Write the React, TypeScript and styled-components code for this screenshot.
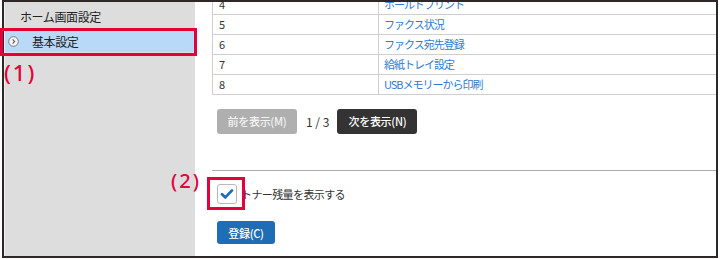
import styled, { createGlobalStyle } from 'styled-components';

const GlobalStyle = createGlobalStyle`
  body {
    margin: 0;
    background: #fff;
    font-family: "Noto Sans CJK JP", "Noto Sans", sans-serif;
  }
`;

const Screen = styled.div`
  position: relative;
  width: 720px;
  height: 260px;
  overflow: hidden;
  background: #fff;
`;

const Frame = styled.div`
  box-sizing: border-box;
  margin-left: 2px;
  width: 716px;
  height: 258px;
  border: 2px solid #2e2727;
  display: flex;
  overflow: hidden;
`;

const Sidebar = styled.div`
  width: 191px;
  flex-shrink: 0;
  background: #dddddd;
  border-left: 1px solid #f0f0f0;
  box-sizing: border-box;
  padding-top: 3px;
  display: flex;
  flex-direction: column;
  gap: 3px;
`;

const NavItem = styled.div<{ $active?: boolean }>`
  height: 22px;
  display: flex;
  align-items: center;
  gap: 13px;
  padding-left: ${(p) => (p.$active ? '3px' : '15px')};
  background: ${(p) => (p.$active ? '#b9d9f8' : 'transparent')};
  font-size: 12px;
  letter-spacing: -0.4px;
  color: #222;
`;

const Main = styled.div`
  flex: 1;
  overflow: hidden;
  padding-left: 17px;
`;

const Table = styled.table`
  margin-top: -8px;
  width: 540px;
  border-collapse: collapse;
  border-left: 1px solid #cfcfcf;
  font-size: 11px;
`;

const Row = styled.tr`
  height: 20px;
  border-bottom: 1px solid #cfcfcf;
`;

const NumCell = styled.td`
  width: 159px;
  padding: 0 0 0 6px;
  border-right: 1px solid #cfcfcf;
  color: #333;
`;

const LinkCell = styled.td`
  padding: 0 0 0 5px;
  color: #2f7ad2;
  letter-spacing: -1px;
`;

const Pager = styled.div`
  margin-top: 14px;
  padding-left: 5px;
  display: flex;
  align-items: center;
`;

const Button = styled.div<{ $tone: 'off' | 'dark' | 'blue' }>`
  width: ${(p) => (p.$tone === 'blue' ? '58px' : '80px')};
  height: ${(p) => (p.$tone === 'blue' ? '23px' : '25px')};
  display: inline-flex;
  align-items: center;
  justify-content: center;
  border-radius: 3px;
  font-size: 11px;
  font-weight: 500;
  letter-spacing: -0.3px;
  color: ${(p) => (p.$tone === 'off' ? '#f2f2f2' : '#fff')};
  background: ${(p) =>
    p.$tone === 'off' ? '#afafaf' : p.$tone === 'dark' ? '#333333' : '#1e6db5'};
`;

const PageCount = styled.span`
  margin: 0 8px 0 9px;
  font-size: 12px;
  color: #333;
`;

const Divider = styled.div`
  margin-top: 36px;
  border-top: 1px solid #ababab;
`;

const CheckRow = styled.div`
  margin-top: 13px;
  padding-left: 5px;
  display: flex;
  align-items: center;
  gap: 4px;
  font-size: 11px;
  letter-spacing: -0.6px;
  color: #333;
`;

const CheckBox = styled.div`
  box-sizing: border-box;
  width: 20px;
  height: 20px;
  border: 1px solid #b8b8b8;
  border-radius: 3px;
  background: #fff;
  display: flex;
  align-items: center;
  justify-content: center;
`;

const Submit = styled.div`
  margin-top: 15px;
  padding-left: 5px;
`;

const Marker = styled.div<{ $x: number; $y: number; $w: number; $h: number }>`
  position: absolute;
  left: ${(p) => p.$x}px;
  top: ${(p) => p.$y}px;
  width: ${(p) => p.$w}px;
  height: ${(p) => p.$h}px;
  box-sizing: border-box;
  border: 3px solid #e4003b;
`;

const Label = styled.div<{ $x: number; $y: number; $size: number }>`
  position: absolute;
  left: ${(p) => p.$x}px;
  top: ${(p) => p.$y}px;
  font-family: "Noto Sans", sans-serif;
  font-size: ${(p) => p.$size}px;
  font-weight: 500;
  line-height: 1;
  letter-spacing: 2px;
  color: #e4003b;
`;

const rows = [
  { n: '4', label: 'ホールドプリント' },
  { n: '5', label: 'ファクス状況' },
  { n: '6', label: 'ファクス宛先登録' },
  { n: '7', label: '給紙トレイ設定' },
  { n: '8', label: 'USBメモリーから印刷' },
];

function ChevronCircle() {
  return (
    <svg width="11" height="11" viewBox="0 0 11 11">
      <circle cx="5.5" cy="5.5" r="4.8" fill="#f5f5f5" stroke="#7a7a7a" strokeWidth="1" />
      <path d="M4.6 3.4 L6.6 5.5 L4.6 7.6" fill="none" stroke="#666" strokeWidth="1.2" />
    </svg>
  );
}

export default function App() {
  return (
    <Screen>
      <GlobalStyle />
      <Frame>
        <Sidebar>
          <NavItem>ホーム画面設定</NavItem>
          <NavItem $active>
            <ChevronCircle />
            基本設定
          </NavItem>
        </Sidebar>
        <Main>
          <Table>
            <tbody>
              {rows.map((r) => (
                <Row key={r.n}>
                  <NumCell>{r.n}</NumCell>
                  <LinkCell>{r.label}</LinkCell>
                </Row>
              ))}
            </tbody>
          </Table>
          <Pager>
            <Button $tone="off">前を表示(M)</Button>
            <PageCount>1 / 3</PageCount>
            <Button $tone="dark">次を表示(N)</Button>
          </Pager>
          <Divider />
          <CheckRow>
            <CheckBox>
              <svg width="14" height="12" viewBox="0 0 14 12">
                <path d="M2 6.2 L5.4 9.4 L12 2.4" fill="none" stroke="#1f6db6" strokeWidth="2.8" strokeLinecap="round" strokeLinejoin="round" />
              </svg>
            </CheckBox>
            トナー残量を表示する
          </CheckRow>
          <Submit>
            <Button $tone="blue">登録(C)</Button>
          </Submit>
        </Main>
      </Frame>
      <Marker $x={0} $y={28} $w={197} $h={28} />
      <Marker $x={207} $y={177} $w={38} $h={33} />
      <Label $x={4} $y={61} $size={22}>(1)</Label>
      <Label $x={171} $y={171} $size={20}>(2)</Label>
    </Screen>
  );
}
